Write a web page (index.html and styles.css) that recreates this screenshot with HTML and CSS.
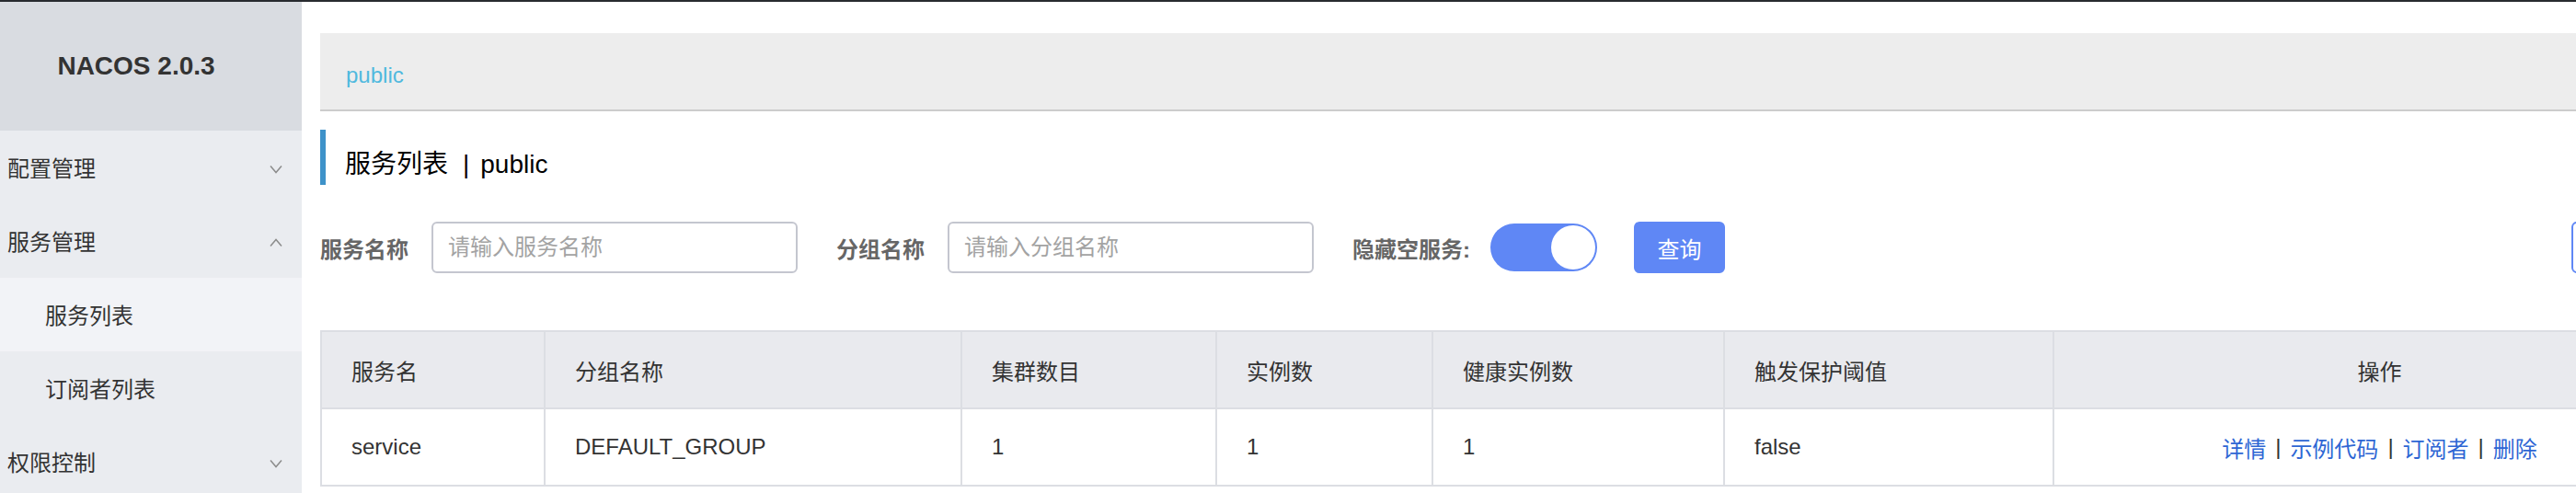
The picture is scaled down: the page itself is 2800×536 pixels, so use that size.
FILE: index.html
```html
<!DOCTYPE html>
<html lang="zh-CN">
<head>
<meta charset="utf-8">
<title>Nacos</title>
<link rel="stylesheet" href="styles.css">
</head>
<body>
<div class="topbar"></div>
<div class="layout">
  <aside class="sidebar">
    <div class="logo">NACOS 2.0.3</div>
    <ul class="menu">
      <li class="menu-item"><span>配置管理</span>
        <svg class="chev" width="14" height="10" viewBox="0 0 14 10"><path d="M1 1.5 L7 8.5 L13 1.5"/></svg>
      </li>
      <li class="menu-item"><span>服务管理</span>
        <svg class="chev" width="14" height="10" viewBox="0 0 14 10"><path d="M1 8.5 L7 1.5 L13 8.5"/></svg>
      </li>
      <li class="menu-sub active">服务列表</li>
      <li class="menu-sub">订阅者列表</li>
      <li class="menu-item"><span>权限控制</span>
        <svg class="chev" width="14" height="10" viewBox="0 0 14 10"><path d="M1 1.5 L7 8.5 L13 1.5"/></svg>
      </li>
    </ul>
  </aside>
  <main class="main">
    <div class="ns-bar"><span class="ns">public</span></div>
    <h1 class="page-title"><span>服务列表</span><span class="sep">|</span><span>public</span></h1>
    <div class="search">
      <span class="label">服务名称</span>
      <input class="input" type="text" placeholder="请输入服务名称">
      <span class="label">分组名称</span>
      <input class="input" type="text" placeholder="请输入分组名称">
      <span class="label label-switch">隐藏空服务:</span>
      <span class="switch"><span class="knob"></span></span>
      <button class="btn-primary" type="button">查询</button>
      <button class="btn-create" type="button" aria-label="创建服务"></button>
    </div>
    <div class="table">
      <div class="tr thead">
        <div class="td">服务名</div>
        <div class="td">分组名称</div>
        <div class="td">集群数目</div>
        <div class="td">实例数</div>
        <div class="td">健康实例数</div>
        <div class="td">触发保护阈值</div>
        <div class="td td-op">操作</div>
      </div>
      <div class="tr">
        <div class="td">service</div>
        <div class="td">DEFAULT_GROUP</div>
        <div class="td">1</div>
        <div class="td">1</div>
        <div class="td">1</div>
        <div class="td">false</div>
        <div class="td td-op">
          <a class="link">详情</a><span class="bar">|</span><a class="link">示例代码</a><span class="bar">|</span><a class="link">订阅者</a><span class="bar">|</span><a class="link">删除</a>
        </div>
      </div>
    </div>
  </main>
</div>
</body>
</html>
```
FILE: styles.css
```css
html, body {
  margin: 0;
  padding: 0;
}
body {
  width: 2800px;
  height: 536px;
  overflow: hidden;
  background: #ffffff;
  font-family: "Liberation Sans", "Noto Sans CJK SC", sans-serif;
  color: #333333;
}
.topbar {
  height: 2px;
  background: #282b2f;
}
.layout {
  display: flex;
  height: 534px;
}
.sidebar {
  width: 328px;
  flex-shrink: 0;
  background: #eaecf0;
}
.logo {
  height: 140px;
  box-sizing: border-box;
  padding-right: 32px;
  background: #d9dce1;
  display: flex;
  align-items: center;
  justify-content: center;
  font-size: 28px;
  font-weight: bold;
  color: #333333;
}
.menu {
  list-style: none;
  margin: 0;
  padding: 0;
}
.menu-item,
.menu-sub {
  height: 80px;
  box-sizing: border-box;
  padding-top: 4px;
  display: flex;
  align-items: center;
  font-size: 24px;
  line-height: 24px;
  color: #333333;
}
.menu-item {
  padding-left: 8px;
  padding-right: 21px;
  justify-content: space-between;
}
.menu-sub {
  padding-left: 49px;
}
.menu-sub.active {
  background: #f2f3f7;
}
.chev path {
  fill: none;
  stroke: #8c8c8c;
  stroke-width: 1.5;
}
.main {
  width: 2594px;
  flex-shrink: 0;
  margin-left: 20px;
  padding-top: 34px;
}
.ns-bar {
  height: 85px;
  box-sizing: border-box;
  background: #ededed;
  border-bottom: 2px solid #cccccc;
  padding: 34px 0 0 28px;
}
.ns {
  font-size: 24px;
  line-height: 24px;
  color: #50b9de;
}
.page-title {
  margin: 20px 0 0;
  height: 60px;
  box-sizing: border-box;
  border-left: 6px solid #3e92c9;
  padding: 16px 0 0 21px;
  display: flex;
  align-items: center;
  font-size: 28px;
  line-height: 28px;
  font-weight: normal;
  color: #000000;
}
.sep {
  margin: 0 12px 0 16px;
}
.search {
  display: flex;
  align-items: center;
  height: 56px;
  margin-top: 40px;
}
.label {
  font-size: 24px;
  font-weight: bold;
  color: #666666;
  margin-right: 25px;
  white-space: nowrap;
}
.label-switch {
  margin-right: 22px;
}
.input {
  width: 398px;
  height: 56px;
  box-sizing: border-box;
  border: 2px solid #c4c6cf;
  border-radius: 6px;
  padding: 0 16px;
  margin: 0 42px 0 0;
  font-family: inherit;
  font-size: 24px;
  color: #333333;
  background: #ffffff;
  outline: none;
}
.input::placeholder {
  color: #a3a3a3;
}
.switch {
  position: relative;
  width: 116px;
  height: 52px;
  border-radius: 26px;
  background: #5f87f5;
  margin-right: 40px;
  flex-shrink: 0;
}
.knob {
  position: absolute;
  right: 2px;
  top: 2px;
  width: 48px;
  height: 48px;
  border-radius: 50%;
  background: #ffffff;
}
.btn-primary {
  width: 99px;
  height: 56px;
  border: none;
  border-radius: 6px;
  background: #5f87f5;
  color: #ffffff;
  font-family: inherit;
  font-size: 24px;
  padding: 0;
}
.btn-create {
  margin-left: auto;
  width: 147px;
  height: 56px;
  box-sizing: border-box;
  border: 2px solid #5f87f5;
  border-radius: 6px;
  background: #ffffff;
  padding: 0;
}
.table {
  margin-top: 62px;
  border-top: 2px solid #dcdee3;
}
.tr {
  display: grid;
  grid-template-columns: 243px 453px 277px 235px 317px 358px 711px;
}
.td {
  height: 84px;
  box-sizing: border-box;
  border-left: 2px solid #dcdee3;
  border-bottom: 2px solid #dcdee3;
  padding-left: 32px;
  display: flex;
  align-items: center;
  font-size: 24px;
  color: #333333;
  white-space: nowrap;
}
.thead .td {
  background: #e9eaee;
}
.td-op {
  justify-content: center;
  padding-left: 0;
  border-right: 2px solid #dcdee3;
}
.link {
  color: #2e66d4;
}
.bar {
  margin: 0 10px;
  color: #333333;
}
```
